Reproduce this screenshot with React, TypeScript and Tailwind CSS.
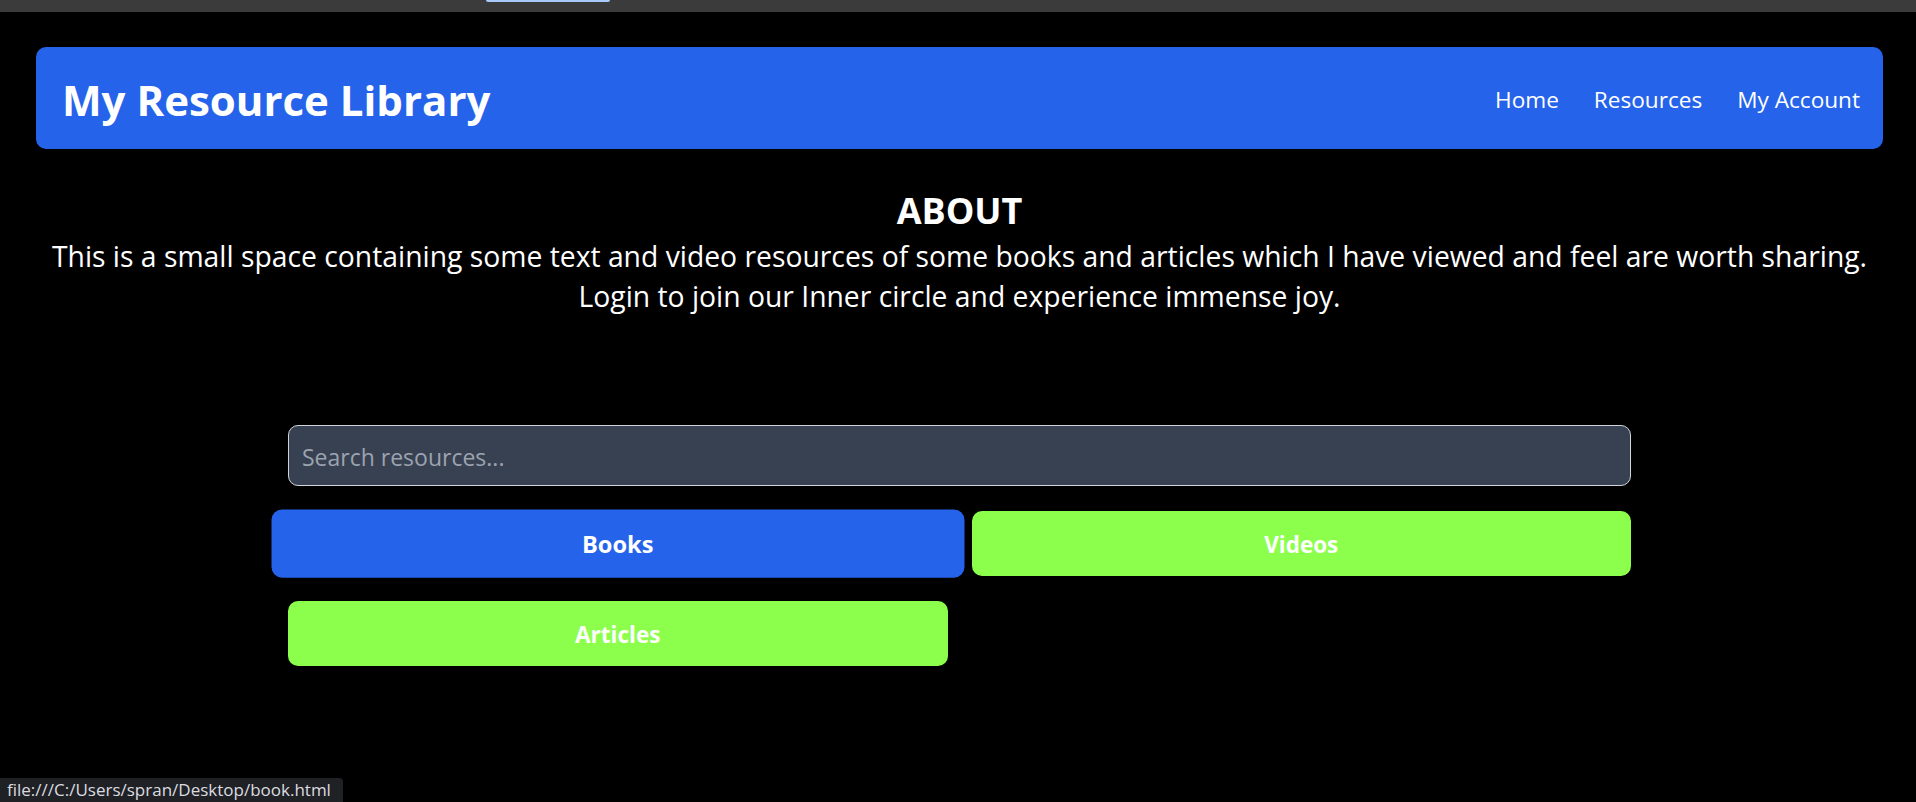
import React from 'react';

const navLinks = ['Home', 'Resources', 'My Account'];

const categories = [
  { label: 'Books', active: true },
  { label: 'Videos', active: false },
  { label: 'Articles', active: false },
];

const App: React.FC = () => {
  return (
    <div className="relative min-h-screen bg-black text-white font-['Open_Sans',_'Noto_Sans',_sans-serif]">
      {/* browser chrome strip */}
      <div className="relative h-[12px] bg-[#3b3b3b]">
        <div className="absolute left-[486px] top-0 h-[2px] w-[124px] rounded-b bg-[#a8c7fa]" />
      </div>

      <div className="pl-[36px] pr-[33px] pt-[35px]">
        <header className="flex h-[102px] items-center justify-between rounded-[10px] bg-[#2563eb] pl-[26px] pr-[23px] pt-[4px]">
          <h1 className="text-[42px] font-bold leading-none">My Resource Library</h1>
          <nav className="flex items-center gap-[35px] text-[22.6px]">
            {navLinks.map((link) => (
              <a key={link} href="#" className="hover:underline">
                {link}
              </a>
            ))}
          </nav>
        </header>

        <section className="mt-[39px] text-center">
          <h2 className="text-[36px] font-bold leading-[45px]">ABOUT</h2>
          <p className="mt-[3px] text-[28.3px] leading-[40px]">
            This is a small space containing some text and video resources of some books and articles which I have viewed and feel are worth sharing.
            <br />
            Login to join our Inner circle and experience immense joy.
          </p>
        </section>

        <div className="mx-auto mt-[109px] w-[1343px]">
          <input
            type="text"
            placeholder="Search resources..."
            className="h-[61px] w-full rounded-[10px] border border-[#d1d5db] bg-[#374151] px-[13px] pt-[2px] text-[23px] text-white outline-none placeholder:text-[#9ca3af]"
          />

          <div className="mt-[25px] grid grid-cols-2 gap-x-[24px] gap-y-[25px]">
            {categories.map((cat) => (
              <button
                key={cat.label}
                className={
                  cat.active
                    ? 'h-[65px] scale-105 rounded-[10px] bg-[#2563eb] pt-[3px] text-[22.5px] font-bold text-white'
                    : 'h-[65px] rounded-[10px] bg-[#8cff4c] pt-[3px] text-[22.5px] font-bold text-white'
                }
              >
                {cat.label}
              </button>
            ))}
          </div>
        </div>
      </div>

      {/* status bar link preview */}
      <div className="absolute bottom-0 left-0 flex h-[24px] w-[343px] items-center rounded-tr-[4px] bg-[#202124] px-[7px] text-[17px] text-[#dadce0]">
        file:///C:/Users/spran/Desktop/book.html
      </div>
    </div>
  );
};

export default App;
